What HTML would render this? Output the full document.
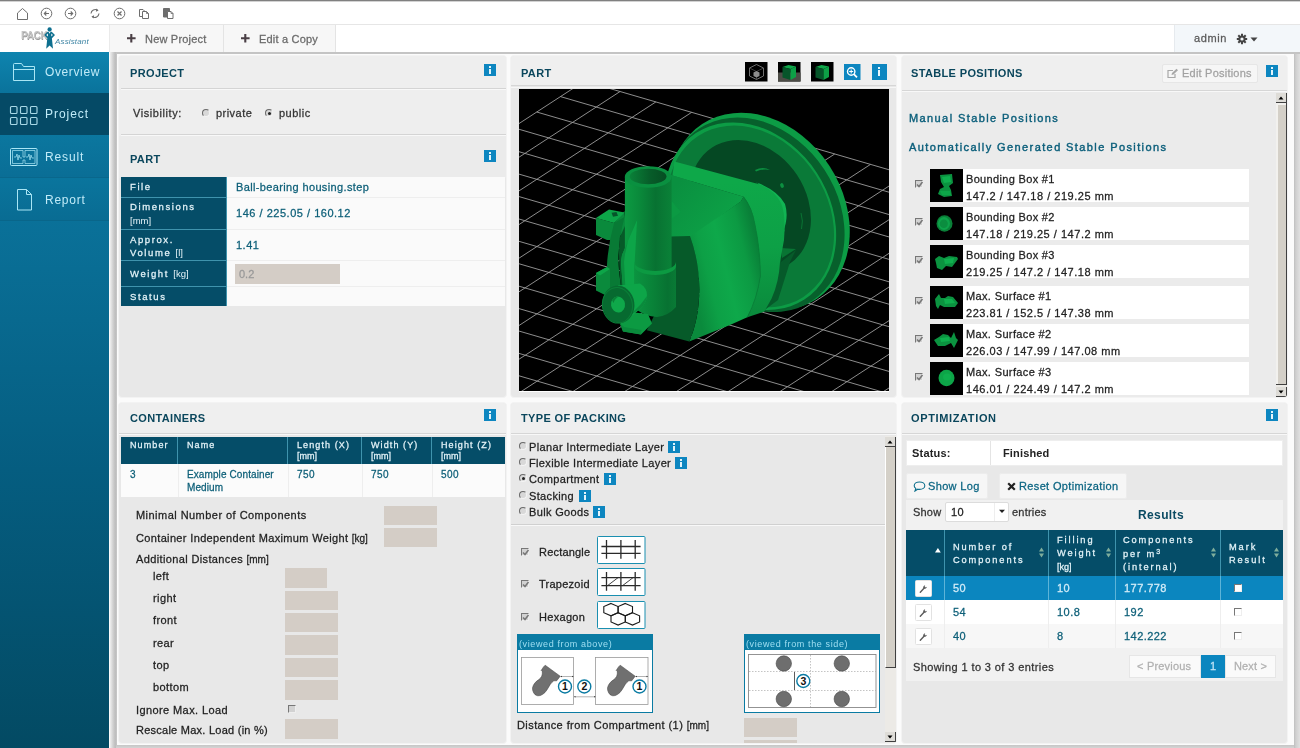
<!DOCTYPE html>
<html><head><meta charset="utf-8"><title>PackAssistant</title>
<style>
*{box-sizing:border-box;margin:0;padding:0}
html,body{width:1300px;height:748px;overflow:hidden;background:#fff}
body{font-family:"Liberation Sans",sans-serif;font-size:11px;color:#222;position:relative}
.a{position:absolute}
.t{position:absolute;white-space:nowrap;line-height:1;-webkit-text-stroke:0.26px;will-change:transform}
.panel{position:absolute;background:#e8e8e8;border:1px solid #f3f3f3;border-radius:4px;overflow:hidden}
.ph{position:absolute;left:0;right:0;top:0;background:#efefef;border-bottom:1px solid #d6d6d6}
.ptitle{position:absolute;white-space:nowrap;line-height:1;will-change:transform;font-weight:bold;font-size:11px;color:#0a465c;letter-spacing:0.35px}
.info{position:absolute;width:12px;height:12px;background:#0d86c0}
.info:before{content:"";position:absolute;left:5.200px;top:2px;width:1.600px;height:2px;background:#e2f4fb}
.info:after{content:"";position:absolute;left:5.200px;top:5px;width:1.600px;height:5px;background:#e2f4fb}
.hc{position:absolute;background:#054d68;color:#e4f3f8;font-weight:normal;-webkit-text-stroke:0.2px #e4f3f8;font-size:9.5px;letter-spacing:1.6px;border-right:1px solid #3f93ad;border-bottom:1px solid #3f93ad}
.inp{position:absolute;background:#d4cdc6}
.teal{color:#0d5f78}
.cb{position:absolute;width:8px;height:8px;background:#d2d2d2;border-top:1px solid #777;border-left:1px solid #777;border-right:1px solid #eee;border-bottom:1px solid #eee}
.rad{position:absolute;width:8px;height:8px;border-radius:50%;background:#d8d8d8;border:1px solid #6a6a6a;border-right-color:#f4f4f4;border-bottom-color:#f4f4f4}
</style></head><body><div style="position:absolute;left:0;top:0;width:1300px;height:748px;overflow:hidden">
<!-- top chrome -->
<div class="a" style="left:0;top:0;width:1300px;height:1px;background:#808080"></div>
<div class="a" style="left:0;top:1px;width:1300px;height:1px;background:#d2d2d2"></div>
<div class="a" style="left:0;top:24px;width:1300px;height:1px;background:#e6e6e6"></div>
<svg class="a" style="left:0;top:2px" width="200" height="22" viewBox="0 0 200 22" fill="none" stroke="#6e6e6e" stroke-width="1">
 <path d="M17.5 17.5V11L22.5 6.5L27.5 11V17.5Z"/>
 <circle cx="46.5" cy="11.5" r="5.3"/><path d="M49 11.5H44.5M46.3 9.5L44.3 11.5L46.3 13.5" stroke-width="1.1"/>
 <circle cx="70.5" cy="11.5" r="5.3"/><path d="M68 11.5H72.5M70.7 9.5L72.7 11.5L70.7 13.5" stroke-width="1.1"/>
 <path d="M91 11.500A4.300 4.300 0 0 1 97.500 8.200M99 11.500A4.300 4.300 0 0 1 92.500 14.800" stroke-width="1.100"/><path d="M96.300 6.600L98.600 8.500L95.900 9.800ZM93.700 16.400L91.400 14.500L94.100 13.200Z" fill="#6e6e6e" stroke="none"/>
 <circle cx="119.5" cy="11.5" r="5.3"/><path d="M117.5 9.5L121.5 13.5M121.5 9.5L117.5 13.5" stroke-width="1.2"/>
 <path d="M139.500 7.500H143L144.500 9V14.500H139.500Z" fill="#fff"/><path d="M142.500 9.500H146.500L148.500 11.500V16.500H142.500Z" fill="#fff"/><path d="M146.500 9.500V11.500H148.500" stroke-width="0.800"/>
 <path d="M163.500 6.500H169.500V15H163.500Z" fill="#6e6e6e" stroke="#6e6e6e"/><path d="M167.500 9.500H171L173 11.500V16.500H167.500Z" fill="#fff" stroke="#6e6e6e"/><path d="M171 9.500V11.500H173" stroke-width="0.800"/>
</svg>
<!-- logo -->
<div class="a" style="left:0;top:25px;width:109px;height:27px;background:#fff"></div>
<div class="t" style="left:20.500px;top:30.500px;font-size:10px;font-weight:bold;color:#c4c4c4;letter-spacing:-0.300px;-webkit-text-stroke:0;text-shadow:0.500px 0.500px 0 #9a9a9a,-0.500px -0.500px 0 #fff">PACK</div>
<svg class="a" style="left:42px;top:26px" width="16" height="25" viewBox="42 26 16 25"><circle cx="49.600" cy="29.500" r="2.150" fill="#0d6f8f"/><path d="M49.600 31.700L47.500 31.700L44.200 35L47.300 38.300L46.200 48.700L49.600 45.600L53 48.700L51.900 38.300L55 35L51.700 31.700Z" fill="#0d6f8f"/><path d="M46.300 35L47.900 33.600V36.400ZM52.900 35L51.300 33.600V36.400ZM48.600 31.700H50.600L49.600 33.800Z" fill="#fff"/></svg>
<div class="t" style="left:54.500px;top:38px;font-size:8px;font-style:italic;color:#3f86a5;letter-spacing:0.150px;-webkit-text-stroke:0">Assistant</div>
<!-- top buttons -->
<div class="a" style="left:109px;top:25px;width:115px;height:27px;background:#f7f7f7;border-left:1px solid #eaeaea;border-right:1px solid #e4e4e4"></div>
<div class="a" style="left:224px;top:25px;width:112px;height:27px;background:#f7f7f7;border-right:1px solid #e4e4e4"></div>
<svg class="a" style="left:127px;top:34px" width="9" height="9" viewBox="0 0 9 9"><path d="M4.300 0V8.600M0 4.300H8.600" stroke="#4a3f45" stroke-width="2.100"/></svg>
<div class="t" style="left:144.500px;top:33.600px;font-size:11px;color:#6a6a6a;letter-spacing:0.2px">New Project</div>
<svg class="a" style="left:241px;top:34px" width="9" height="9" viewBox="0 0 9 9"><path d="M4.300 0V8.600M0 4.300H8.600" stroke="#4a3f45" stroke-width="2.100"/></svg>
<div class="t" style="left:259px;top:33.600px;font-size:11px;color:#6a6a6a;letter-spacing:0.2px">Edit a Copy</div>
<div class="a" style="left:1174px;top:25px;width:126px;height:27px;background:#f3f7fa;border-left:1px solid #e6eaee"></div>
<div class="t" style="left:1194px;top:33px;font-size:11px;color:#5a5a5a;letter-spacing:0.6px">admin</div>
<svg class="a" style="left:1236px;top:33px" width="24" height="12" viewBox="0 0 24 12"><g fill="#444"><circle cx="6" cy="6" r="3.6"/><g stroke="#444" stroke-width="2"><path d="M6 0.8V11.2M0.8 6H11.2M2.3 2.3L9.7 9.7M9.7 2.3L2.3 9.7"/></g><circle cx="6" cy="6" r="1.6" fill="#f3f7fa"/><path d="M14.5 4.5H21.5L18 8.5Z"/></g></svg>
<!-- sidebar -->
<div class="a" style="left:0;top:52px;width:109px;height:696px;background:linear-gradient(180deg,#0d7fa9 0%,#0a7199 24%,#055d80 60%,#034a63 100%)"></div>
<div class="a" style="left:0;top:52px;width:109px;height:41px;background:linear-gradient(180deg,#0e84af,#0a739b)"></div>
<div class="a" style="left:0;top:93px;width:109px;height:42px;background:#054a66"></div>
<div class="a" style="left:0;top:135px;width:109px;height:43px;background:linear-gradient(180deg,#0b779f,#0a6e96);border-bottom:1px solid #09678c"></div>
<div class="a" style="left:0;top:178px;width:109px;height:43px;background:linear-gradient(180deg,#0a759d,#096c93);border-bottom:1px solid #09668a"></div>
<div class="t" style="left:45px;top:66px;font-size:12px;-webkit-text-stroke:0;color:#c0ebf8;letter-spacing:0.62px">Overview</div>
<div class="t" style="left:45px;top:108px;font-size:12px;-webkit-text-stroke:0;color:#c0ebf8;letter-spacing:0.96px">Project</div>
<div class="t" style="left:45px;top:151px;font-size:12px;-webkit-text-stroke:0;color:#c0ebf8;letter-spacing:0.87px">Result</div>
<div class="t" style="left:45px;top:194px;font-size:12px;-webkit-text-stroke:0;color:#c0ebf8;letter-spacing:0.74px">Report</div>
<svg class="a" style="left:0;top:52px" width="45" height="180" viewBox="0 0 45 180" fill="none" stroke="#a9e6f5" stroke-width="1">
 <path d="M13.5 12.5V28.5H34.5V14.5H23.5L21.5 11.5H14.5Q13.5 11.5 13.5 12.5ZM13.5 17.5H34.5"/>
 <g stroke="#a8d8e6" stroke-width="1.150"><rect x="10.5" y="54.5" width="6.5" height="7" rx="1"/><rect x="20.5" y="54.5" width="6.5" height="7" rx="1"/><rect x="30.5" y="54.5" width="6.5" height="7" rx="1"/><rect x="10.5" y="65.5" width="6.5" height="7" rx="1"/><rect x="20.5" y="65.5" width="6.5" height="7" rx="1"/><rect x="30.5" y="65.5" width="6.5" height="7" rx="1"/></g>
 <rect x="10.5" y="96.5" width="26.5" height="17" rx="1"/><path d="M12.5 98.5H23V105H25V98.5H35V111.5H25V108H23V111.5H12.5Z" stroke-width="0.7"/><path d="M14 105H16L17 102L18 108L19 103L20 106H22M26 105H28L29 102L30 108L31 103L32 106H34" stroke-width="0.7"/>
 <path d="M17.5 137.5H26.5L31.5 142.5V158H17.5ZM26.5 137.5V142.5H31.5"/>
</svg>
<!-- main area background -->
<div class="a" style="left:109px;top:52px;width:1191px;height:696px;background:#fbfbfb"></div>
<div class="a" style="left:110px;top:52px;width:1190px;height:2px;background:#c4c4c4"></div>
<div class="a" style="left:110px;top:52px;width:7px;height:696px;background:linear-gradient(90deg,#efefef 0%,#d6d6d6 35%,#bdbdbd 75%,#c8c8c8 100%)"></div>
<div class="a" style="left:1293.500px;top:54px;width:6.500px;height:694px;background:linear-gradient(90deg,#bfbfbf 0%,#cfcfcf 30%,#e0e0e0 100%)"></div>
<div class="a" style="left:116px;top:744.500px;width:1178px;height:3.500px;background:linear-gradient(180deg,#c6c6c6,#d4d4d4)"></div>
<!-- PROJECT / PART panel -->
<div class="panel" style="left:118px;top:55px;width:389px;height:343px;background:#e8e8e8">
 <div class="a" style="left:0;top:0;width:387px;height:122px;background:#eeeeee"></div>
 <div class="a" style="left:2px;top:32px;width:385px;height:1px;background:#d4d4d4"></div>
 <div class="a" style="left:2px;top:33px;width:385px;height:1px;background:#f8f8f8"></div>
 <div class="a" style="left:2px;top:78px;width:385px;height:1px;background:#d4d4d4"></div>
 <div class="a" style="left:2px;top:79px;width:385px;height:1px;background:#f8f8f8"></div>
 <div class="a" style="left:0;top:80px;width:387px;height:42px;background:#ebebeb"></div>
 <div class="ptitle" style="left:11px;top:12px">PROJECT</div>
 <div class="info" style="left:365px;top:8px"></div>
 <div class="t" style="left:14px;top:52px;color:#333;letter-spacing:0.58px">Visibility:</div>
 <div class="rad" style="left:83px;top:53px"></div>
 <div class="t" style="left:97px;top:52px;color:#333;letter-spacing:0.46px">private</div>
 <div class="rad" style="left:146px;top:53px"></div><div class="a" style="left:149px;top:56px;width:3px;height:3px;border-radius:50%;background:#222"></div>
 <div class="t" style="left:160px;top:52px;color:#333;letter-spacing:0.5px">public</div>
 <div class="ptitle" style="left:11px;top:98px">PART</div>
 <div class="info" style="left:365px;top:94px"></div>
 <!-- table -->
 <div class="a" style="left:2px;top:121px;width:384px;height:129px;background:#fafafa"></div>
 <div class="a" style="left:108px;top:141px;width:278px;height:1px;background:#eeeeee"></div>
 <div class="a" style="left:108px;top:173px;width:278px;height:1px;background:#eeeeee"></div>
 <div class="a" style="left:108px;top:204px;width:278px;height:1px;background:#eeeeee"></div>
 <div class="a" style="left:108px;top:230px;width:278px;height:1px;background:#eeeeee"></div>
 <div class="hc" style="left:2px;top:121px;width:106px;height:21px"><span class="t" style="left:9px;top:5px">File</span></div>
 <div class="hc" style="left:2px;top:142px;width:106px;height:32px"><span class="t" style="left:9px;top:4px">Dimensions</span><span class="t" style="left:9px;top:18px;-webkit-text-stroke:0;letter-spacing:0;font-size:9.5px">[mm]</span></div>
 <div class="hc" style="left:2px;top:174px;width:106px;height:31px"><span class="t" style="left:9px;top:5px">Approx.</span><span class="t" style="left:9px;top:18px">Volume <span style="-webkit-text-stroke:0;letter-spacing:0;font-size:9.5px">[l]</span></span></div>
 <div class="hc" style="left:2px;top:205px;width:106px;height:26px"><span class="t" style="left:9px;top:8px">Weight <span style="-webkit-text-stroke:0;letter-spacing:0;font-size:9.5px">[kg]</span></span></div>
 <div class="hc" style="left:2px;top:231px;width:106px;height:19px;border-bottom:none"><span class="t" style="left:9px;top:5px">Status</span></div>
 <div class="t teal" style="left:117px;top:126px;letter-spacing:0.36px">Ball-bearing housing.step</div>
 <div class="t teal" style="left:117px;top:152px;letter-spacing:0.52px">146 / 225.05 / 160.12</div>
 <div class="t teal" style="left:117px;top:184px;letter-spacing:0.5px">1.41</div>
 <div class="inp" style="left:116px;top:208px;width:105px;height:20px"></div>
 <div class="t" style="left:120px;top:213px;color:#999">0.2</div>
</div>
<!-- CONTAINERS panel -->
<div class="panel" style="left:118px;top:402px;width:389px;height:342px;background:#e8e8e8">
 <div class="ph" style="height:31px"></div><div class="a" style="left:0;top:31px;width:387px;height:1px;background:#f8f8f8"></div>
 <div class="ptitle" style="left:11px;top:10.400px">CONTAINERS</div>
 <div class="info" style="left:365px;top:6px"></div>
 <div class="a" style="left:2px;top:34px;width:384px;height:60px;background:#fbfbfb"></div>
 <div class="hc" style="left:2px;top:34px;width:57px;height:27px;-webkit-text-stroke:0.2px #e4f3f8;font-size:9px;letter-spacing:1.1px;border-bottom:none"><span class="t" style="left:9px;top:4px">Number</span></div>
 <div class="hc" style="left:59px;top:34px;width:110px;height:27px;-webkit-text-stroke:0.2px #e4f3f8;font-size:9px;letter-spacing:1.1px;border-bottom:none"><span class="t" style="left:9px;top:4px">Name</span></div>
 <div class="hc" style="left:169px;top:34px;width:74px;height:27px;-webkit-text-stroke:0.2px #e4f3f8;font-size:9px;letter-spacing:1.1px;border-bottom:none"><span class="t" style="left:9px;top:4px">Length (X)</span><span class="t" style="left:9px;top:15px;letter-spacing:0">[mm]</span></div>
 <div class="hc" style="left:243px;top:34px;width:70px;height:27px;-webkit-text-stroke:0.2px #e4f3f8;font-size:9px;letter-spacing:1.1px;border-bottom:none"><span class="t" style="left:9px;top:4px">Width (Y)</span><span class="t" style="left:9px;top:15px;letter-spacing:0">[mm]</span></div>
 <div class="hc" style="left:313px;top:34px;width:73px;height:27px;-webkit-text-stroke:0.2px #e4f3f8;font-size:9px;letter-spacing:1.1px;border-bottom:none;border-right:none"><span class="t" style="left:9px;top:4px">Height (Z)</span><span class="t" style="left:9px;top:15px;letter-spacing:0">[mm]</span></div>
 <div class="a" style="left:59px;top:61px;width:1px;height:33px;background:#eee"></div>
 <div class="a" style="left:169px;top:61px;width:1px;height:33px;background:#eee"></div>
 <div class="a" style="left:243px;top:61px;width:1px;height:33px;background:#eee"></div>
 <div class="a" style="left:313px;top:61px;width:1px;height:33px;background:#eee"></div>
 <div class="t teal" style="left:11px;top:67px;font-size:10px;letter-spacing:0.1px">3</div>
 <div class="t teal" style="left:68px;top:67px;font-size:10px;letter-spacing:0.1px">Example Container</div>
 <div class="t teal" style="left:68px;top:80px;font-size:10px;letter-spacing:0.1px">Medium</div>
 <div class="t teal" style="left:178px;top:67px;font-size:10px;letter-spacing:0.4px">750</div>
 <div class="t teal" style="left:252px;top:67px;font-size:10px;letter-spacing:0.4px">750</div>
 <div class="t teal" style="left:322px;top:67px;font-size:10px;letter-spacing:0.4px">500</div>
 <div class="t" style="left:17px;top:107px;letter-spacing:0.46px">Minimal Number of Components</div>
 <div class="t" style="left:17px;top:130px;letter-spacing:0.35px">Container Independent Maximum Weight <span style="font-size:10px;letter-spacing:0">[kg]</span></div>
 <div class="t" style="left:17px;top:151px;letter-spacing:0.37px">Additional Distances <span style="font-size:10px;letter-spacing:0">[mm]</span></div>
 <div class="inp" style="left:265px;top:103px;width:53px;height:19px"></div>
 <div class="inp" style="left:265px;top:125px;width:53px;height:19px"></div>
 <div class="t" style="left:34px;top:168px;letter-spacing:0.4px">left</div>
 <div class="t" style="left:34px;top:190px;letter-spacing:0.4px">right</div>
 <div class="t" style="left:34px;top:212px;letter-spacing:0.4px">front</div>
 <div class="t" style="left:34px;top:235px;letter-spacing:0.4px">rear</div>
 <div class="t" style="left:34px;top:257px;letter-spacing:0.4px">top</div>
 <div class="t" style="left:34px;top:279px;letter-spacing:0.4px">bottom</div>
 <div class="t" style="left:17px;top:302px;letter-spacing:0.4px">Ignore Max. Load</div>
 <div class="t" style="left:17px;top:322px;letter-spacing:0.25px">Rescale Max. Load (in %)</div>
 <div class="inp" style="left:166px;top:165px;width:42px;height:20px"></div>
 <div class="inp" style="left:166px;top:188px;width:53px;height:19px"></div>
 <div class="inp" style="left:166px;top:210px;width:53px;height:19px"></div>
 <div class="inp" style="left:166px;top:232px;width:53px;height:20px"></div>
 <div class="inp" style="left:166px;top:255px;width:53px;height:19px"></div>
 <div class="inp" style="left:166px;top:277px;width:53px;height:20px"></div>
 <div class="cb" style="left:169px;top:302px"></div>
 <div class="inp" style="left:166px;top:316px;width:53px;height:20px"></div>
</div>
<!-- PART viewer panel -->
<div class="panel" style="left:510px;top:55px;width:387px;height:343px;background:#e8e8e8">
 <div class="ph" style="height:30px"></div><div class="a" style="left:0;top:31px;width:386px;height:1px;background:#f6f6f6"></div>
 <div class="ptitle" style="left:10px;top:12px">PART</div>
 <svg class="a" style="left:234px;top:6px" width="24" height="21" viewBox="0 0 24 21"><rect width="22.500" height="19.500" fill="#000"/><path d="M11.5 2.5L18.5 6V14L11.5 17.5L4.500 14V6Z" fill="none" stroke="#8a8a8a" stroke-width="0.8"/><path d="M11.5 9.500V17.5M11.5 9.500L4.500 6M11.5 9.500L18.5 6" stroke="#666" stroke-width="0.6"/><path d="M8.5 10.5L11.5 9L14.5 10.5V14L11.5 15.5L8.5 14Z" fill="#8d8d8d"/></svg>
 <svg class="a" style="left:267px;top:6px" width="24" height="21" viewBox="0 0 24 21"><rect width="22.500" height="19.500" fill="#000"/><rect y="10.500" width="22.500" height="9" fill="#4c4c46"/><path d="M4.500 5L10.500 3L18 4.500L12.500 7Z" fill="#10a84a"/><path d="M4.500 5L12.500 7V18L4.500 15.500Z" fill="#06552a"/><path d="M12.500 7L18 4.500V15L12.500 18Z" fill="#0da046"/></svg>
 <svg class="a" style="left:300px;top:6px" width="24" height="21" viewBox="0 0 24 21"><rect width="22.500" height="19.500" fill="#000"/><path d="M4.500 5L10.500 3L18 4.500L12.500 7Z" fill="#10a84a"/><path d="M4.500 5L12.500 7V18L4.500 15.500Z" fill="#06552a"/><path d="M12.500 7L18 4.500V15L12.500 18Z" fill="#0da046"/></svg>
 <svg class="a" style="left:333px;top:8px" width="17" height="17" viewBox="0 0 17 17"><rect width="16.500" height="16" fill="#0d86c0"/><circle cx="7.200" cy="7.500" r="3.700" fill="none" stroke="#fff" stroke-width="1.400"/><path d="M9.800 10.200L13 13.400" stroke="#fff" stroke-width="1.800"/><path d="M7.200 5.500V9.500M5.200 7.500H9.200" stroke="#fff" stroke-width="1"/></svg>
 <div class="a" style="left:361px;top:8px;width:15px;height:16px;background:#0d86c0"></div>
 <div class="a" style="left:367.200px;top:11.200px;width:1.800px;height:1.800px;background:#e8f6fc"></div>
 <div class="a" style="left:367.200px;top:14.200px;width:1.800px;height:5.600px;background:#e8f6fc"></div>
 <div class="a" style="left:8px;top:335px;width:370px;height:1px;background:#fff"></div>
<svg class="a" style="left:8px;top:33px" width="370" height="302" viewBox="0 0 370 302">
<rect width="370" height="302" fill="#000"/>
<path d="M65.3 -7.9L-458.6 332.7M101.1 2.5L-422.8 343.1M136.9 12.9L-387.1 353.5M172.7 23.3L-351.3 363.9M208.4 33.7L-315.5 374.3M244.2 44.1L-279.8 384.7M280.0 54.5L-244.0 395.1M315.7 65.0L-208.2 405.6M351.5 75.4L-172.4 416.0M387.3 85.8L-136.7 426.4M423.1 96.2L-100.9 436.8M458.8 106.6L-65.1 447.2M494.6 117.0L-29.3 457.6M530.4 127.4L6.4 468.0M566.2 137.8L42.2 478.4M601.9 148.2L78.0 488.8M637.7 158.6L113.7 499.2M673.5 169.1L149.5 509.7M709.2 179.5L185.3 520.1M745.0 189.9L221.1 530.5M780.8 200.3L256.8 540.9M816.6 210.7L292.6 551.3M65.3 -7.9L816.6 210.7M41.5 7.6L792.7 226.2M17.7 23.0L768.9 241.7M-6.1 38.5L745.1 257.1M-29.9 54.0L721.3 272.6M-53.7 69.5L697.5 288.1M-77.6 85.0L673.7 303.6M-101.4 100.5L649.8 319.1M-125.2 115.9L626.0 334.5M-149.0 131.4L602.2 350.0M-172.8 146.9L578.4 365.5M-196.6 162.4L554.6 381.0M-220.5 177.9L530.8 396.5M-244.3 193.3L507.0 412.0M-268.1 208.8L483.1 427.4M-291.9 224.3L459.3 442.9M-315.7 239.8L435.5 458.4M-339.5 255.3L411.7 473.9M-363.4 270.8L387.9 489.4M-387.2 286.2L364.1 504.8M-411.0 301.7L340.2 520.3M-434.8 317.2L316.4 535.8M-458.6 332.7L292.6 551.3" stroke="#9c9c9c" stroke-width="0.9" fill="none"/>
<g transform="translate(-519,-89)">
<defs>
<linearGradient id="gTube" gradientUnits="userSpaceOnUse" x1="625" x2="672" y1="0" y2="0"><stop offset="0" stop-color="#0c9a42"/><stop offset="0.3" stop-color="#0a8a3b"/><stop offset="0.65" stop-color="#087232"/><stop offset="1" stop-color="#0a8238"/></linearGradient>
<linearGradient id="gCol" gradientUnits="userSpaceOnUse" x1="634" x2="676" y1="0" y2="0"><stop offset="0" stop-color="#0b9440"/><stop offset="0.45" stop-color="#098238"/><stop offset="0.8" stop-color="#087232"/><stop offset="1" stop-color="#097a35"/></linearGradient>
<linearGradient id="gSide" gradientUnits="userSpaceOnUse" x1="690" x2="762" y1="280" y2="262"><stop offset="0" stop-color="#0a8a3c"/><stop offset="0.25" stop-color="#0da046"/><stop offset="0.5" stop-color="#0ea84a"/><stop offset="0.8" stop-color="#0c9a43"/><stop offset="1" stop-color="#098038"/></linearGradient>
<linearGradient id="gHole" gradientUnits="userSpaceOnUse" x1="630" x2="667" y1="0" y2="0"><stop offset="0" stop-color="#0a8038"/><stop offset="0.55" stop-color="#075c29"/><stop offset="1" stop-color="#064c22"/></linearGradient>
<linearGradient id="gTop" gradientUnits="userSpaceOnUse" x1="680" x2="735" y1="180" y2="225"><stop offset="0" stop-color="#0a9040"/><stop offset="1" stop-color="#0da347"/></linearGradient>
<linearGradient id="gRim" gradientUnits="userSpaceOnUse" x1="700" x2="850" y1="120" y2="260"><stop offset="0" stop-color="#0c9c45"/><stop offset="0.5" stop-color="#10b050"/><stop offset="1" stop-color="#12b856"/></linearGradient>
<linearGradient id="gFace" gradientUnits="userSpaceOnUse" x1="700" x2="830" y1="150" y2="280"><stop offset="0" stop-color="#054823"/><stop offset="1" stop-color="#065a2a"/></linearGradient>
<linearGradient id="gMed" gradientUnits="userSpaceOnUse" x1="740" x2="790" y1="125" y2="310"><stop offset="0" stop-color="#0a7a38"/><stop offset="0.5" stop-color="#086c31"/><stop offset="1" stop-color="#065729"/></linearGradient>
<linearGradient id="gRim2" gradientUnits="userSpaceOnUse" x1="720" x2="800" y1="120" y2="310"><stop offset="0" stop-color="#0c9c45"/><stop offset="0.35" stop-color="#10b050"/><stop offset="0.7" stop-color="#0fa84a"/><stop offset="1" stop-color="#0a8a3c"/></linearGradient>
<linearGradient id="gStrip" gradientUnits="userSpaceOnUse" x1="760" x2="770" y1="180" y2="315"><stop offset="0" stop-color="#0ea849"/><stop offset="0.5" stop-color="#0da046"/><stop offset="1" stop-color="#0a8a3c"/></linearGradient>
</defs>
<!-- disc: ellipses a=R along 56.8deg, b=.8R -->
<g>
<ellipse transform="translate(759.4 211.5) rotate(56.8)" rx="104.5" ry="83.6" fill="url(#gRim)"/>
<ellipse transform="translate(755.5 214.8) rotate(56.8)" rx="103" ry="82.4" fill="#07602c"/>
<ellipse transform="translate(750.3 216.2) rotate(56.8)" rx="99.3" ry="79.4" fill="url(#gRim2)"/>
<ellipse transform="translate(750.8 216.4) rotate(56.8)" rx="96.2" ry="77" fill="url(#gMed)"/>
<ellipse transform="translate(750.4 206) rotate(56.8)" rx="70" ry="56" fill="url(#gFace)"/>
</g>
<path d="M755 170 Q763 166 770 170 Q763 168.500 756 171.500Z" fill="#0c8f40"/>
<ellipse cx="782" cy="185.500" rx="1.800" ry="2.500" fill="#0c8f40" transform="rotate(-20 782 185.500)"/>
<ellipse cx="783" cy="229.500" rx="1.800" ry="2.500" fill="#0c8f40" transform="rotate(-20 783 229.500)"/>
<path d="M801 213 Q803.500 221 801.500 229" fill="none" stroke="#0a7836" stroke-width="0.900"/>
<!-- hub right of the strip -->
<path d="M756 182 Q778 190 785 204 Q789 216 784 232 L781 262 L796 250 L790 262 L778 300 L762 312 L740 250Z" fill="#065a2a"/>
<path d="M758 183 Q778 191 785 204 Q789 217 783 232 L770 225 L764 195Z" fill="#11b453"/>
<path d="M781 248 L796 249 L782 258Z" fill="#087433"/>
<!-- strip (end plate) -->
<path d="M674.4 161.4 L760.9 184.7 Q775 191 781 203 Q786 214 784 240 L780 262 Q779 282 771.6 298.6 L764.2 311.7 L747.3 317.3 Q757 299 760.4 276 Q760 248 755 225 Q752 207 743.5 196.8 L672.5 175.5Z" fill="url(#gStrip)"/>
<!-- top face -->
<path d="M671 175 L743.5 196.8 L740.8 201.5 L690 238 L671 238Z" fill="url(#gTop)"/><path d="M671.5 201 L681 212 L671.5 219Z" fill="#0b9a43"/>
<!-- curved side face -->
<path d="M690 236.5 L740.8 201.5 L743.5 196.8 Q752 207 755 225 Q760 248 760.4 276 Q757 299 747.3 317.3 L730.5 324.8 L689.3 341.6 C702 312 703 272 690 236.5Z" fill="url(#gSide)"/>
<path d="M743.5 196.8 Q752 207 755 225 Q760 248 760.4 276 Q757 299 747.3 317.3" fill="none" stroke="#098038" stroke-width="0.9"/>
<!-- front face dark -->
<path d="M671 236.5 L690 236 C703 272 702 312 689.3 341.6 L646.8 330.3 L654 316 L671 306Z" fill="#065a29"/>
<!-- left upper block -->
<path d="M596 218 L614 223 L624.500 211 L626 232 L613 240 L607 240 L596 235Z" fill="#0a8a3c"/>
<path d="M596 218 L609 209.400 L624.500 212.600 L614 223Z" fill="#0da548"/>
<path d="M611.500 212.800 L616.500 212 L618 215.800 L613 216.800Z" fill="#06552a"/>
<!-- arc bracket -->
<path d="M614.100 223.100 Q608 245 607 265 Q607 278 609 292 L622 292 Q618 270 618.500 255 Q619.500 236 624.500 217Z" fill="#087a35"/>
<path d="M619.500 238 L625 226 L637 221 L637 290 L621 290 Q618 262 619.500 238Z" fill="#065a28"/>
<!-- lower-left block -->
<path d="M596 273 L607 267 L610 269 L610 294 L607 296 L596 290.500Z" fill="#0a8a3c"/>
<path d="M596 273 L607 267 L610 269 L600 275.500Z" fill="#0da548"/>
<!-- tube -->
<path d="M624.9 177 H671.6 V290 H624.9Z" fill="url(#gTube)"/>
<ellipse cx="648.2" cy="177" rx="23.4" ry="10.8" fill="#0a9040"/>
<ellipse cx="648.1" cy="176.5" rx="18.4" ry="7.7" fill="url(#gHole)"/>
<!-- fin -->
<path d="M637.100 220 L628 241 L622 255 L621 262 L623 290 L634.500 290 L634.500 265Z" fill="#0da548"/>
<path d="M628 241 L622 255 L621 262 L623 290 L625.500 290 L624 262 L625 254Z" fill="#0a8e3e"/>
<!-- collar of tube -->
<path d="M634.3 262 A20.85 9 0 0 0 676 262 L676 306.9 Q668 316 656.9 316.9 Q646 317 634.3 308Z" fill="url(#gCol)"/>
<path d="M634.3 262 A20.85 9 0 0 0 676 262 L676 266 A20.85 9 0 0 1 634.3 266Z" fill="#0c9a42"/>
<!-- foot -->
<path d="M620 323.500 L623 331.500 L641 334.500 L652 323.500 L648 314 L630 312 L626 320Z" fill="#0c9a42"/>
<path d="M620 323.500 L623 331.500 L641 334.500 L641.500 330 L624 327Z" fill="#0a8a3c"/>
<!-- port -->
<path d="M618 285.500 L640 283.500 Q647.500 288 647 296 Q646 304 640 309 L626 321Z" fill="#0da548"/>
<path d="M630 315 L640 309 Q646 304 647 296 L641 304Z" fill="#0a8a3c"/>
<ellipse cx="618.400" cy="304.400" rx="16" ry="18.800" fill="#076a30" transform="rotate(-8 618.400 304.400)"/>
<ellipse cx="617.300" cy="305.200" rx="15" ry="17.800" fill="none" stroke="#0a8038" stroke-width="1" transform="rotate(-8 618.400 304.400)"/>
<ellipse cx="618" cy="304.500" rx="7" ry="8" fill="#0fa84a" transform="rotate(-8 618 304.500)"/>
<path d="M612 300 Q614 296 619 296.500 Q615 298 613.500 303Z" fill="#0a8038"/>

</g>
</svg></div>
<!-- STABLE POSITIONS panel -->
<div class="panel" style="left:901px;top:55px;width:387px;height:343px;background:#ebebeb">
 <div class="ph" style="height:35px"></div>
 <div class="a" style="left:0;top:35px;width:385px;height:1px;background:#f8f8f8"></div>
 <div class="ptitle" style="left:9px;top:12px">STABLE POSITIONS</div>
 <div class="a" style="left:260px;top:8px;width:96px;height:19px;background:#f6f6f6;border:1px solid #e6e6e6;border-radius:2px"></div>
 <svg class="a" style="left:265px;top:12px" width="12" height="11" viewBox="0 0 12 11" fill="none" stroke="#a8a8a8" stroke-width="1.200"><path d="M8 6V9.500H1V2.500H6"/><path d="M4.500 7L5 5L9.500 0.800L11 2.300L6.500 6.500Z" fill="#a8a8a8" stroke="none"/></svg>
 <div class="t" style="left:280px;top:12px;font-size:11px;color:#a2a2a2;letter-spacing:0.22px">Edit Positions</div>
 <div class="info" style="left:364px;top:9px"></div>
 <div class="t" style="left:7px;top:57px;font-size:11px;-webkit-text-stroke:0.4px;color:#0a5e7a;letter-spacing:1.4px">Manual Stable Positions</div>
 <div class="t" style="left:7px;top:86px;font-size:11px;-webkit-text-stroke:0.4px;color:#0a5e7a;letter-spacing:1.4px">Automatically Generated Stable Positions</div>
 <!-- scrollbar -->
 <div class="a" style="left:374px;top:37px;width:11px;height:304px;background:#d4d0c8;border-right:1px solid #404040"></div>
 <div class="a" style="left:374px;top:37px;width:10px;height:10px;background:#dedcd7;border-bottom:1px solid #404040"></div>
 <div class="a" style="left:374px;top:47px;width:10px;height:2px;background:#f2f1ee"></div>
 <div class="a" style="left:374px;top:327.500px;width:10px;height:1.500px;background:#404040"></div>
 <div class="a" style="left:374px;top:329px;width:11px;height:2px;background:#eceae6"></div>
 <div class="a" style="left:374px;top:49px;width:1.500px;height:279px;background:#f2f1ee"></div>
 <div class="a" style="left:374px;top:331px;width:10px;height:10px;background:#dedcd7;border-bottom:1px solid #404040"></div>
 <svg class="a" style="left:374px;top:37px" width="11" height="304" viewBox="0 0 11 304"><path d="M2.500 6.500H7.500L5 3.500Z" fill="#000"/><path d="M2.500 297.500H7.500L5 300.500Z" fill="#000"/></svg>
 <div class="a" style="left:28px;top:113px;width:319px;height:33px;background:#fff"></div>
 <svg class="a" style="left:28px;top:113px" width="33" height="33" viewBox="0 0 33 33"><rect width="33" height="33" fill="#000"/><path d="M10 6L22 5L23 14L19 17L21 21L22 27L14 28L8 25L10 20L14 18L11 13Z" fill="#0b9340"/><path d="M12 8L20 7L21 13L14 14Z" fill="#0fb04e"/><path d="M10 22L20 22L21 26L12 26Z" fill="#0da548"/></svg>
 <div class="cb" style="left:13px;top:124.0px"></div>
 <svg class="a" style="left:14px;top:125.0px" width="8" height="8" viewBox="0 0 8 8"><path d="M1 3.500L3 5.500L6.500 1" fill="none" stroke="#777" stroke-width="1.500"/></svg>
 <div class="t" style="left:64px;top:118px;letter-spacing:0.33px;color:#222">Bounding Box #1</div>
 <div class="t" style="left:64px;top:135px;letter-spacing:0.52px;color:#222">147.2 / 147.18 / 219.25 mm</div>
 <div class="a" style="left:28px;top:151px;width:319px;height:33px;background:#fff"></div>
 <svg class="a" style="left:28px;top:151px" width="33" height="33" viewBox="0 0 33 33"><rect width="33" height="33" fill="#000"/><ellipse cx="14.500" cy="16.500" rx="8" ry="8.300" fill="#0a8038"/><ellipse cx="14" cy="16.500" rx="6" ry="6.500" fill="#0ea34a"/><ellipse cx="13.800" cy="16.700" rx="4" ry="4.300" fill="#0b8d3f"/></svg>
 <div class="cb" style="left:13px;top:162.0px"></div>
 <svg class="a" style="left:14px;top:163.0px" width="8" height="8" viewBox="0 0 8 8"><path d="M1 3.500L3 5.500L6.500 1" fill="none" stroke="#777" stroke-width="1.500"/></svg>
 <div class="t" style="left:64px;top:156px;letter-spacing:0.33px;color:#222">Bounding Box #2</div>
 <div class="t" style="left:64px;top:173px;letter-spacing:0.52px;color:#222">147.18 / 219.25 / 147.2 mm</div>
 <div class="a" style="left:28px;top:189px;width:319px;height:33px;background:#fff"></div>
 <svg class="a" style="left:28px;top:189px" width="33" height="33" viewBox="0 0 33 33"><rect width="33" height="33" fill="#000"/><path d="M5 14L9 11L14 13L19 11L27 12L28 14L25 18L22 22L16 21L12 25L7 23L6 18Z" fill="#0b9340"/><path d="M14 14L24 13L23 18L15 19Z" fill="#0fb04e"/></svg>
 <div class="cb" style="left:13px;top:200.0px"></div>
 <svg class="a" style="left:14px;top:201.0px" width="8" height="8" viewBox="0 0 8 8"><path d="M1 3.500L3 5.500L6.500 1" fill="none" stroke="#777" stroke-width="1.500"/></svg>
 <div class="t" style="left:64px;top:194px;letter-spacing:0.33px;color:#222">Bounding Box #3</div>
 <div class="t" style="left:64px;top:211px;letter-spacing:0.52px;color:#222">219.25 / 147.2 / 147.18 mm</div>
 <div class="a" style="left:28px;top:229.5px;width:319px;height:33px;background:#fff"></div>
 <svg class="a" style="left:28px;top:229.5px" width="33" height="33" viewBox="0 0 33 33"><rect width="33" height="33" fill="#000"/><path d="M5 13L9 8L11 12L15 12L18 10L23 11L28 17L25 21L14 21L10 19L8 23L6 20Z" fill="#0b9340"/><path d="M14 13L22 13L25 17L15 18Z" fill="#0fb04e"/></svg>
 <div class="cb" style="left:13px;top:240.5px"></div>
 <svg class="a" style="left:14px;top:241.5px" width="8" height="8" viewBox="0 0 8 8"><path d="M1 3.500L3 5.500L6.500 1" fill="none" stroke="#777" stroke-width="1.500"/></svg>
 <div class="t" style="left:64px;top:234.5px;letter-spacing:0.36px;color:#222">Max. Surface #1</div>
 <div class="t" style="left:64px;top:251.5px;letter-spacing:0.52px;color:#222">223.81 / 152.5 / 147.38 mm</div>
 <div class="a" style="left:28px;top:267.5px;width:319px;height:33px;background:#fff"></div>
 <svg class="a" style="left:28px;top:267.5px" width="33" height="33" viewBox="0 0 33 33"><rect width="33" height="33" fill="#000"/><path d="M4 16L9 13L13 10L18 11L21 14L24 8L26 14L28 16L26 20L24 24L21 19L15 22L8 22L6 19Z" fill="#0b9340"/><path d="M10 14L19 13L20 17L11 18Z" fill="#0fb04e"/></svg>
 <div class="cb" style="left:13px;top:278.5px"></div>
 <svg class="a" style="left:14px;top:279.5px" width="8" height="8" viewBox="0 0 8 8"><path d="M1 3.500L3 5.500L6.500 1" fill="none" stroke="#777" stroke-width="1.500"/></svg>
 <div class="t" style="left:64px;top:272.5px;letter-spacing:0.36px;color:#222">Max. Surface #2</div>
 <div class="t" style="left:64px;top:289.5px;letter-spacing:0.52px;color:#222">226.03 / 147.99 / 147.08 mm</div>
 <div class="a" style="left:28px;top:305.5px;width:319px;height:33px;background:#fff"></div>
 <svg class="a" style="left:28px;top:305.5px" width="33" height="33" viewBox="0 0 33 33"><rect width="33" height="33" fill="#000"/><ellipse cx="16.500" cy="16" rx="8" ry="8.300" fill="#0da548"/><ellipse cx="17" cy="15" rx="4" ry="3.500" fill="#0fb04e"/></svg>
 <div class="cb" style="left:13px;top:316.5px"></div>
 <svg class="a" style="left:14px;top:317.5px" width="8" height="8" viewBox="0 0 8 8"><path d="M1 3.500L3 5.500L6.500 1" fill="none" stroke="#777" stroke-width="1.500"/></svg>
 <div class="t" style="left:64px;top:310.5px;letter-spacing:0.36px;color:#222">Max. Surface #3</div>
 <div class="t" style="left:64px;top:327.5px;letter-spacing:0.52px;color:#222">146.01 / 224.49 / 147.2 mm</div>
</div>
<!-- TYPE OF PACKING panel -->
<div class="panel" style="left:510px;top:402px;width:387px;height:342px;background:#e8e8e8">
 <div class="ph" style="height:31px"></div>
 <div class="a" style="left:0;top:31px;width:386px;height:1px;background:#f8f8f8"></div>
 <div class="ptitle" style="left:10px;top:10.400px">TYPE OF PACKING</div>
 <div class="a" style="left:0;top:121px;width:374px;height:1px;background:#d0d0d0"></div>
 <div class="a" style="left:0;top:122px;width:374px;height:1px;background:#f8f8f8"></div>
 <div class="rad" style="left:8px;top:39px"></div><div class="t" style="left:18px;top:39px;letter-spacing:0.35px">Planar Intermediate Layer</div><div class="info" style="left:157px;top:38px"></div>
 <div class="rad" style="left:8px;top:55px"></div><div class="t" style="left:18px;top:55px;letter-spacing:0.35px">Flexible Intermediate Layer</div><div class="info" style="left:164px;top:54px"></div>
 <div class="rad" style="left:8px;top:71px"></div><div class="a" style="left:11px;top:74px;width:3px;height:3px;border-radius:50%;background:#222"></div><div class="t" style="left:18px;top:71px;letter-spacing:0.35px">Compartment</div><div class="info" style="left:93px;top:70px"></div>
 <div class="rad" style="left:8px;top:88px"></div><div class="t" style="left:18px;top:88px;letter-spacing:0.35px">Stacking</div><div class="info" style="left:68px;top:87px"></div>
 <div class="rad" style="left:8px;top:104px"></div><div class="t" style="left:18px;top:104px;letter-spacing:0.35px">Bulk Goods</div><div class="info" style="left:82px;top:103px"></div>
 <!-- shapes -->
 <div class="cb" style="left:10px;top:145px"></div><svg class="a" style="left:11px;top:146px" width="8" height="8" viewBox="0 0 8 8"><path d="M1 3.500L3 5.500L6.500 1" fill="none" stroke="#777" stroke-width="1.500"/></svg>
 <div class="t" style="left:28px;top:144px;letter-spacing:0.2px">Rectangle</div>
 <svg class="a" style="left:86px;top:133px" width="49" height="28" viewBox="0 0 49 28"><rect x="0.500" y="0.500" width="47.500" height="27" rx="1" fill="#fff" stroke="#1a8fb0"/><path d="M4.400 10.500H43.600M4.400 17.400H43.600M9.500 4.100V22.800M23.900 4.100V22.800M38.200 4.100V22.800" stroke="#2a2a2a" stroke-width="1.300" fill="none"/></svg>
 <div class="cb" style="left:10px;top:177px"></div><svg class="a" style="left:11px;top:178px" width="8" height="8" viewBox="0 0 8 8"><path d="M1 3.500L3 5.500L6.500 1" fill="none" stroke="#777" stroke-width="1.500"/></svg>
 <div class="t" style="left:28px;top:176px;letter-spacing:0.25px">Trapezoid</div>
 <svg class="a" style="left:86px;top:165px" width="49" height="28" viewBox="0 0 49 28"><rect x="0.500" y="0.500" width="47.500" height="27" rx="1" fill="#fff" stroke="#1a8fb0"/><path d="M4.400 9.600H43.600M4.400 17.600H43.600M9.500 4.100V22.800M23.900 4.100V22.800M38.200 4.100V22.800" stroke="#2a2a2a" stroke-width="1.300" fill="none"/><path d="M10.600 17.600L21.100 9.600M25.600 17.600L36.100 9.600" stroke="#2a2a2a" stroke-width="0.900" fill="none"/></svg>
 <div class="cb" style="left:10px;top:210px"></div><svg class="a" style="left:11px;top:211px" width="8" height="8" viewBox="0 0 8 8"><path d="M1 3.500L3 5.500L6.500 1" fill="none" stroke="#777" stroke-width="1.500"/></svg>
 <div class="t" style="left:28px;top:209px;letter-spacing:0.3px">Hexagon</div>
 <svg class="a" style="left:86px;top:198px" width="49" height="28" viewBox="0 0 49 28"><rect x="0.500" y="0.500" width="47.500" height="27" rx="1" fill="#fff" stroke="#1a8fb0"/><g fill="none" stroke="#1a1a1a" stroke-width="1.100"><path d="M14.0 2.4L21.1 5.5L21.1 11.7L14.0 14.8L6.8 11.7L6.8 5.5Z"/><path d="M28.3 2.4L35.5 5.5L35.5 11.7L28.3 14.8L21.1 11.7L21.1 5.5Z"/><path d="M21.1 11.7L28.3 14.8L28.3 21.0L21.1 24.1L14.0 21.0L14.0 14.8Z"/><path d="M35.5 11.7L42.6 14.8L42.6 21.0L35.5 24.1L28.3 21.0L28.3 14.8Z"/></g></svg>
 <!-- viewed from above -->
 <div class="a" style="left:6px;top:231px;width:136px;height:79px;background:#fff;border:1px solid #0a7ba3"></div>
 <div class="a" style="left:6px;top:231px;width:136px;height:16px;background:#0a7ba3"></div>
 <div class="t" style="left:8px;top:236.500px;font-size:9px;color:#9fdff2;-webkit-text-stroke:0;letter-spacing:0.62px">(viewed from above)</div>
 <svg class="a" style="left:6px;top:247px" width="136" height="63" viewBox="0 0 136 63">
  <rect x="4.500" y="7.500" width="52" height="47" fill="#fff" stroke="#999" stroke-width="0.8"/>
  <rect x="78.500" y="7.500" width="52.500" height="47" fill="#fff" stroke="#999" stroke-width="0.8"/>
  <path d="M28.200 15.200L43.200 26.200L39.700 30.800L36.800 30.800Q34.500 32.500 33.400 34.200L29.900 40Q28 43 25.300 44.600Q23 46 20.700 45.800Q18 45.300 16.700 42.900Q15.200 40.500 15.500 37.700Q16.200 35 17.800 33.100Q19.500 31 21.800 29.600Q23.800 28.200 24.700 26.200Q25.600 24 25.300 21.500L24.200 20.400L26.500 16.900Z" fill="#707070" stroke="#3c3c3c" stroke-width="0.5"/>
  <path transform="translate(75 0)" d="M28.200 15.200L43.200 26.200L39.700 30.800L36.800 30.800Q34.500 32.500 33.400 34.200L29.900 40Q28 43 25.300 44.600Q23 46 20.700 45.800Q18 45.300 16.700 42.900Q15.200 40.500 15.500 37.700Q16.200 35 17.800 33.100Q19.500 31 21.800 29.600Q23.800 28.200 24.700 26.200Q25.600 24 25.300 21.500L24.200 20.400L26.500 16.900Z" fill="#707070" stroke="#3c3c3c" stroke-width="0.5"/>
  <path d="M43.500 26.500H56.500M118.500 26.500H131M57 46.800H78.500" stroke="#666" stroke-width="0.5"/><path d="M55 25.800L56.500 26.500L55 27.200ZM45 25.800L43.500 26.500L45 27.200ZM129.500 25.800L131 26.500L129.500 27.200ZM120 25.800L118.500 26.500L120 27.200ZM58.500 46.100L57 46.800L58.500 47.500ZM77 46.100L78.500 46.800L77 47.500Z" fill="#333"/>
  <g fill="#fff" stroke="#0a7ba3" stroke-width="1.400"><circle cx="48" cy="36.500" r="6.500"/><circle cx="67.300" cy="36.500" r="6.500"/><circle cx="122.500" cy="36.500" r="6.500"/></g>
  <g font-family="Liberation Sans" font-weight="bold" font-size="10.500" fill="#111" text-anchor="middle"><text x="48" y="40.300">1</text><text x="67.300" y="40.300">2</text><text x="122.500" y="40.300">1</text></g>
 </svg>
 <!-- viewed from side -->
 <div class="a" style="left:233px;top:231px;width:136px;height:79px;background:#fff;border:1px solid #0a7ba3"></div>
 <div class="a" style="left:233px;top:231px;width:136px;height:16px;background:#0a7ba3"></div>
 <div class="t" style="left:235px;top:236.500px;font-size:9px;color:#9fdff2;-webkit-text-stroke:0;letter-spacing:0.62px">(viewed from the side)</div>
 <svg class="a" style="left:233px;top:247px" width="136" height="63" viewBox="0 0 136 63">
  <rect x="4.500" y="4.500" width="127.500" height="53" fill="#fff" stroke="#888" stroke-width="0.9"/>
  <path d="M5 21.500H132M5 40.500H132M66.500 5V57" stroke="#aaa" stroke-width="0.7" stroke-dasharray="1.500 1.500" fill="none"/>
  <g fill="#6e6e6e" stroke="#444" stroke-width="0.6"><circle cx="39.800" cy="13.500" r="7.700"/><circle cx="97.800" cy="13.500" r="7.700"/><circle cx="39.800" cy="49" r="7.700"/><circle cx="97.800" cy="49" r="7.700"/></g>
  <path d="M50.500 22V40" stroke="#333" stroke-width="0.8"/>
  <circle cx="59.300" cy="31" r="6.500" fill="#fff" stroke="#0a7ba3" stroke-width="1.400"/>
  <text x="59.300" y="34.800" font-family="Liberation Sans" font-weight="bold" font-size="10.500" fill="#111" text-anchor="middle">3</text>
 </svg>
 <div class="t" style="left:6px;top:317px;letter-spacing:0.42px">Distance from Compartment (1) <span style="font-size:10px;letter-spacing:0">[mm]</span></div>
 <div class="inp" style="left:233px;top:315px;width:53px;height:19px"></div>
 <div class="inp" style="left:233px;top:337px;width:53px;height:6px"></div>
 <!-- scrollbar -->
 <div class="a" style="left:374px;top:33px;width:11px;height:307px;background:#eceae6"></div>
 <div class="a" style="left:374.300px;top:44px;width:10.700px;height:221px;background:#d4d0c8;border-right:1px solid #404040;border-bottom:1px solid #404040;border-left:1px solid #fff"></div>
 <div class="a" style="left:374.300px;top:34px;width:10.700px;height:10px;background:#dedcd7;border-right:1px solid #404040;border-bottom:1px solid #404040"></div>
 <div class="a" style="left:374.300px;top:329px;width:10.700px;height:10px;background:#dedcd7;border-right:1px solid #404040;border-bottom:1px solid #404040"></div>
 <svg class="a" style="left:374.300px;top:34px" width="11" height="306" viewBox="0 0 11 306"><path d="M2.500 6.500H7.500L5 3.500Z" fill="#000"/><path d="M2.500 298.500H7.500L5 301.500Z" fill="#000"/></svg>
</div>
<!-- OPTIMIZATION panel -->
<div class="panel" style="left:901px;top:402px;width:387px;height:342px;background:#e8e8e8">
 <div class="ph" style="height:31px"></div>
 <div class="a" style="left:0;top:31px;width:385px;height:1px;background:#f8f8f8"></div>
 <div class="ptitle" style="letter-spacing:0.64px;left:9px;top:10.400px">OPTIMIZATION</div>
 <div class="info" style="left:364px;top:6px"></div>
 <!-- status -->
 <div class="a" style="left:4px;top:37px;width:377px;height:26px;background:#fff;border:1px solid #eee"></div>
 <div class="a" style="left:88px;top:38px;width:1px;height:24px;background:#e4e4e4"></div>
 <div class="t" style="left:10px;top:45px;font-weight:bold;-webkit-text-stroke:0;font-size:11px;color:#222;letter-spacing:0.2px">Status:</div>
 <div class="t" style="left:101px;top:45px;font-weight:bold;-webkit-text-stroke:0;font-size:11px;color:#222;letter-spacing:0.15px">Finished</div>
 <!-- buttons -->
 <div class="a" style="left:4px;top:70px;width:82px;height:26px;background:#f6f6f6;border:1px solid #ececec;border-radius:2px"></div>
 <svg class="a" style="left:11px;top:78px" width="13" height="11" viewBox="0 0 13 11"><path d="M6.500 1C9.500 1 11.800 2.600 11.800 4.700C11.800 6.800 9.500 8.400 6.500 8.400C5.800 8.400 5.200 8.300 4.600 8.200L2 10L2.800 7.400C1.800 6.700 1.200 5.800 1.200 4.700C1.200 2.600 3.500 1 6.500 1Z" fill="none" stroke="#0d6f8c" stroke-width="1.100"/></svg>
 <div class="t" style="left:26px;top:78px;color:#0d6683;letter-spacing:0.35px">Show Log</div>
 <div class="a" style="left:97px;top:70px;width:128px;height:26px;background:#f6f6f6;border:1px solid #ececec;border-radius:2px"></div>
 <svg class="a" style="left:105px;top:79px" width="9" height="9" viewBox="0 0 9 9"><path d="M1.200 1.200L7.800 7.800M7.800 1.200L1.200 7.800" stroke="#222" stroke-width="2.200"/></svg>
 <div class="t" style="left:117px;top:78px;color:#0d6683;letter-spacing:0.36px">Reset Optimization</div>
 <!-- datatable wrapper -->
 <div class="a" style="left:4px;top:97px;width:377px;height:181px;background:#f1f1f1"></div>
 <div class="t" style="left:11px;top:104px;color:#333;letter-spacing:0.21px">Show</div>
 <div class="a" style="left:43px;top:99px;width:64px;height:20px;background:#fff;border:1px solid #dcdcdc;border-radius:2px"></div>
 <div class="a" style="left:92px;top:100px;width:1px;height:18px;background:#eee"></div>
 <div class="t" style="left:49px;top:104px;color:#222;letter-spacing:0.300px">10</div>
 <svg class="a" style="left:96px;top:106px" width="8" height="5" viewBox="0 0 8 5"><path d="M1 0.800H7L4 4Z" fill="#222"/></svg>
 <div class="t" style="left:110px;top:104px;color:#333;letter-spacing:0.21px">entries</div>
 <div class="t" style="left:236px;top:106px;font-weight:bold;-webkit-text-stroke:0;font-size:12px;color:#0a4a62;letter-spacing:0.38px">Results</div>
 <!-- table header -->
 <div class="a" style="left:4px;top:127px;width:377px;height:46px;background:#054d68"></div>
 <div class="a" style="left:42px;top:127px;width:1px;height:70px;background:#3f93ad"></div>
 <div class="a" style="left:146px;top:127px;width:1px;height:70px;background:#3f93ad"></div>
 <div class="a" style="left:213px;top:127px;width:1px;height:70px;background:#3f93ad"></div>
 <div class="a" style="left:318px;top:127px;width:1px;height:70px;background:#3f93ad"></div>
 <div style="color:#e4f3f8;font-size:9.25px;letter-spacing:1.9px">
 <div class="t" style="left:51px;top:139.7px">Number of</div><div class="t" style="left:51px;top:152.7px">Components</div>
 <div class="t" style="left:155px;top:132.7px">Filling</div><div class="t" style="left:155px;top:145.7px">Weight</div><div class="t" style="left:155px;top:159.7px;letter-spacing:0;font-size:9px">[kg]</div>
 <div class="t" style="left:221px;top:132.7px">Components</div><div class="t" style="left:221px;top:146.7px">per m<span style="font-size:7px;position:relative;top:-3px">3</span></div><div class="t" style="left:221px;top:159.7px">(internal)</div>
 <div class="t" style="left:327px;top:139.7px">Mark</div><div class="t" style="left:327px;top:152.7px">Result</div>
 </div>
 <svg class="a" style="left:4px;top:127px" width="377" height="46" viewBox="0 0 377 46"><path d="M29 22.500H34.800L31.900 18Z" fill="#fff"/><g fill="#7fae9c" transform="translate(2 0)"><path d="M131 21.500H136L133.500 17.500ZM131 23.500H136L133.500 27.500Z"/><path d="M198 21.500H203L200.500 17.500ZM198 23.500H203L200.500 27.500Z"/><path d="M303 21.500H308L305.500 17.500ZM303 23.500H308L305.500 27.500Z"/><path d="M366 21.500H371L368.500 17.500ZM366 23.500H371L368.500 27.500Z"/></g></svg>
 <!-- rows -->
 <div class="a" style="left:4px;top:173px;width:377px;height:24px;background:#0b86bf"></div>
 <div class="a" style="left:42px;top:173px;width:1px;height:24px;background:#5db4d8"></div>
 <div class="a" style="left:146px;top:173px;width:1px;height:24px;background:#5db4d8"></div>
 <div class="a" style="left:213px;top:173px;width:1px;height:24px;background:#5db4d8"></div>
 <div class="a" style="left:318px;top:173px;width:1px;height:24px;background:#5db4d8"></div>
 <div class="a" style="left:4px;top:197px;width:377px;height:24px;background:#ffffff"></div>
 <div class="a" style="left:4px;top:221px;width:377px;height:24px;background:#f7f7f7"></div>
 <div class="a" style="left:42px;top:197px;width:1px;height:48px;background:#eee"></div>
 <div class="a" style="left:146px;top:197px;width:1px;height:48px;background:#eee"></div>
 <div class="a" style="left:213px;top:197px;width:1px;height:48px;background:#eee"></div>
 <div class="a" style="left:318px;top:197px;width:1px;height:48px;background:#eee"></div>
 <div class="t" style="left:51px;top:180px;color:#d3ecf8;letter-spacing:0.45px">50</div><div class="t" style="left:155px;top:180px;color:#d3ecf8;letter-spacing:0.45px">10</div><div class="t" style="left:222px;top:180px;color:#d3ecf8;letter-spacing:0.45px">177.778</div>
 <div class="t teal" style="left:51px;top:204px;letter-spacing:0.45px">54</div><div class="t teal" style="left:155px;top:204px;letter-spacing:0.45px">10.8</div><div class="t teal" style="left:222px;top:204px;letter-spacing:0.45px">192</div>
 <div class="t teal" style="left:51px;top:228px;letter-spacing:0.45px">40</div><div class="t teal" style="left:155px;top:228px;letter-spacing:0.45px">8</div><div class="t teal" style="left:222px;top:228px;letter-spacing:0.45px">142.222</div>
 <svg class="a" style="left:12.500px;top:177px" width="18" height="68" viewBox="0 0 18 68">
  <g><rect x="0.500" y="0.500" width="16" height="16" fill="#fff" stroke="#e2e2e2" rx="1"/><path d="M5.300 12.200L9 8.200" stroke="#5c5c5c" stroke-width="1.400" stroke-linecap="round" fill="none"/><path d="M8.400 8.600C7.800 7.300 8.400 5.500 10.200 4.900L9.600 6.300L10.700 7.400L12.100 6.800C11.700 8.500 9.800 9.200 8.400 8.600Z" fill="#5c5c5c"/></g>
  <g transform="translate(0 24)"><rect x="0.500" y="0.500" width="16" height="16" fill="#fff" stroke="#e2e2e2" rx="1"/><path d="M5.300 12.200L9 8.200" stroke="#5c5c5c" stroke-width="1.400" stroke-linecap="round" fill="none"/><path d="M8.400 8.600C7.800 7.300 8.400 5.500 10.200 4.900L9.600 6.300L10.700 7.400L12.100 6.800C11.700 8.500 9.800 9.200 8.400 8.600Z" fill="#5c5c5c"/></g><g transform="translate(0 48)"><rect x="0.500" y="0.500" width="16" height="16" fill="#fff" stroke="#e2e2e2" rx="1"/><path d="M5.300 12.200L9 8.200" stroke="#5c5c5c" stroke-width="1.400" stroke-linecap="round" fill="none"/><path d="M8.400 8.600C7.800 7.300 8.400 5.500 10.200 4.900L9.600 6.300L10.700 7.400L12.100 6.800C11.700 8.500 9.800 9.200 8.400 8.600Z" fill="#5c5c5c"/></g>
 </svg>
 <div class="cb" style="left:332px;top:181px;background:#fff"></div>
 <div class="cb" style="left:332px;top:205px;background:#fff"></div>
 <div class="cb" style="left:332px;top:229px;background:#fff"></div>
 <!-- footer -->
 <div class="t" style="left:11px;top:258.800px;color:#333;letter-spacing:0.4px">Showing 1 to 3 of 3 entries</div>
 <div class="a" style="left:227px;top:252px;width:72px;height:23px;background:#fafafa;border:1px solid #e6e6e6"></div>
 <div class="t" style="left:235px;top:258px;color:#b0b0b0;font-size:11px;letter-spacing:0.2px">&lt; Previous</div>
 <div class="a" style="left:299px;top:252px;width:24px;height:23px;background:#0b86bf"></div>
 <div class="t" style="left:308px;top:258px;color:#bfe3f5;font-size:11px">1</div>
 <div class="a" style="left:323px;top:252px;width:51px;height:23px;background:#fafafa;border:1px solid #e6e6e6"></div>
 <div class="t" style="left:331.500px;top:258px;color:#b0b0b0;font-size:11px;letter-spacing:0.15px">Next &gt;</div>
</div>
</div></body></html>
